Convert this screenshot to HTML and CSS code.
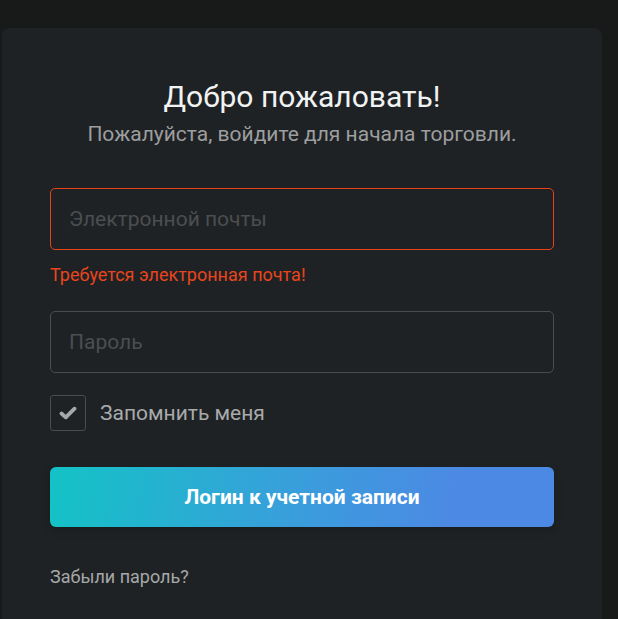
FILE: index.html
```html
<!DOCTYPE html>
<html>
<head>
  <meta charset="UTF-8">
  <title>Вход</title>
  <link rel="stylesheet" href="styles.css">
</head>
<body>
  <div class="login-card">
    <h1>Добро пожаловать!</h1>
    <p class="subtitle">Пожалуйста, войдите для начала торговли.</p>

    <input type="email" class="field field-error" placeholder="Электронной почты">
    <div class="error-text">Требуется электронная почта!</div>

    <input type="password" class="field field-password" placeholder="Пароль">

    <label class="remember">
      <span class="check-box">
        <svg width="18" height="14" viewBox="0 0 18 14">
          <path d="M2.5 7.5 L6.8 11.3 L15.5 2.7" fill="none" stroke="#a6a8a9" stroke-width="3.8" stroke-linecap="round" stroke-linejoin="round"/>
        </svg>
      </span>
      <span class="remember-text">Запомнить меня</span>
    </label>

    <button class="login-button">Логин к учетной записи</button>

    <a class="forgot" href="#">Забыли пароль?</a>
  </div>
</body>
</html>
```

FILE: styles.css
```css
* { box-sizing: border-box; }
body {
  margin: 0;
  height: 100vh;
  background: #181a19;
  font-family: Roboto, "Noto Sans", sans-serif;
  overflow: hidden;
}
.login-card {
  margin: 28px 0 0 2px;
  width: 600px;
  height: 620px;
  background: #1f2224;
  border-radius: 8px 8px 0 0;
  padding: 51px 48px 0 48px;
}
.login-card h1 {
  margin: 0;
  text-align: center;
  font-size: 30px;
  line-height: 36px;
  font-weight: 400;
  color: #f1f2f2;
}
.subtitle {
  margin: 6px 0 0 0;
  text-align: center;
  font-size: 21px;
  line-height: 26px;
  color: #9c9e9f;
}
.field {
  display: block;
  width: 100%;
  height: 62px;
  background: #1f2224;
  border: 1px solid #4a4d4f;
  border-radius: 5px;
  padding: 0 18px;
  font-family: Roboto, "Noto Sans", sans-serif;
  font-size: 21px;
  color: #ddd;
  outline: none;
}
.field::placeholder { color: #4b4e50; }
.field-error {
  margin-top: 41px;
  border-color: #e8421b;
}
.error-text {
  margin-top: 14px;
  font-size: 18px;
  line-height: 22px;
  color: #e8451e;
}
.field-password { margin-top: 25px; }
.remember {
  margin-top: 22px;
  display: flex;
  align-items: center;
  gap: 14px;
  cursor: pointer;
}
.check-box {
  width: 36px;
  height: 36px;
  border: 1px solid #4a4c4e;
  border-radius: 3px;
  display: flex;
  align-items: center;
  justify-content: center;
}
.remember-text {
  font-size: 21px;
  color: #a8aaab;
}
.login-button {
  display: block;
  margin-top: 36px;
  width: 100%;
  height: 60px;
  border: none;
  border-radius: 6px;
  background: linear-gradient(100deg, #13c3c6 0%, #3a9ddc 50%, #4c89e4 80%, #4c89e4 100%);
  box-shadow: 0 3px 8px rgba(0,0,0,0.2);
  color: #fff;
  font-family: Roboto, "Noto Sans", sans-serif;
  font-size: 21px;
  font-weight: 700;
  cursor: pointer;
}
.forgot {
  display: inline-block;
  margin-top: 39px;
  font-size: 18px;
  line-height: 22px;
  color: #a6a8a9;
  text-decoration: none;
}
```
